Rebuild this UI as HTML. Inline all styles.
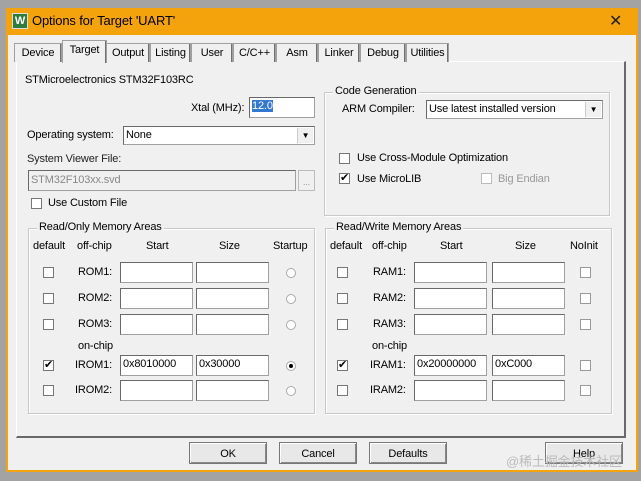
<!DOCTYPE html>
<html><head><style>
body{margin:0;width:641px;height:481px;background:#a3a3a3;position:relative;overflow:hidden;font-family:"Liberation Sans",sans-serif;font-size:11px;letter-spacing:-0.15px;color:#000}
.a{position:absolute}
.win{left:6px;top:8px;width:628px;height:462px;background:#f0f0f0;border:2px solid #f4a40d;border-top:0}
.title{left:6px;top:8px;width:632px;height:27px;background:#f5a30c}
.tab{position:absolute;top:43px;height:18px;border:1px solid #a0a0a0;border-bottom:0;background:#f0f0f0;text-align:center;line-height:18px;box-shadow:inset -1px 0 #707070}
.panel{left:16px;top:61px;width:607px;height:374px;border:1px solid #fff;border-right:2px solid #696969;border-bottom:2px solid #696969}
.grp{position:absolute;border:1px solid #c8c8c8;box-shadow:inset 1px 1px #fff,1px 1px #fff}
.grp span{position:absolute;top:-8px;left:8px;background:#f0f0f0;padding:0 2px}
.ed{position:absolute;height:19px;background:#fff;border:1px solid #a0a0a0;border-top-color:#696969;border-left-color:#696969;box-sizing:border-box;line-height:17px;padding-left:2px}
.cb{position:absolute;width:11px;height:11px;background:#fff;border:1px solid #777;box-sizing:border-box;font-size:11px;line-height:9px;text-align:center}
.rd{position:absolute;width:10px;height:10px;border-radius:50%;border:1px solid #888;box-sizing:border-box;background:#fff}
.btn{position:absolute;top:442px;width:78px;height:22px;border:1px solid #777;box-shadow:inset 1px 1px #fff,inset -1px -1px #888;background:#e8e8e8;text-align:center;line-height:22px;box-sizing:border-box}
.dd{position:absolute;right:1px;top:1px;width:15px;height:15px;background:#f0f0f0;border-left:1px solid #ccc;font-size:8px;text-align:center;line-height:15px}
</style></head><body>
<div class="a win"></div>
<div class="a title"></div>
<div class="a" style="left:12px;top:13px;width:14px;height:14px;background:#2f7d3a;color:#fff;font-weight:bold;font-size:11px;text-align:center;line-height:14px;border:1px solid #ddd">W</div>
<div class="a" style="left:32px;top:13px;font-size:13px">Options for Target 'UART'</div>
<div class="a" style="left:609px;top:11px;font-size:16px;color:#222">✕</div>
<div class="a panel"></div>
<div class="tab" style="left:14px;width:46px">Device</div>
<div class="tab" style="left:106px;width:42px">Output</div>
<div class="tab" style="left:150px;width:39px">Listing</div>
<div class="tab" style="left:191px;width:40px">User</div>
<div class="tab" style="left:233px;width:41px">C/C++</div>
<div class="tab" style="left:276px;width:40px">Asm</div>
<div class="tab" style="left:318px;width:40px">Linker</div>
<div class="tab" style="left:360px;width:44px">Debug</div>
<div class="tab" style="left:406px;width:41px">Utilities</div>
<div class="tab" style="left:62px;top:40px;height:22px;width:43px;z-index:2;line-height:18px">Target</div>

<div class="a" style="left:25px;top:74px">STMicroelectronics STM32F103RC</div>
<div class="a" style="left:191px;top:102px">Xtal (MHz):</div>
<div class="ed" style="left:249px;top:97px;width:66px;height:21px"><span style="background:#3379d1;color:#fff">12.0</span></div>
<div class="a" style="left:27px;top:129px">Operating system:</div>
<div class="ed" style="left:123px;top:126px;width:192px">None<div class="dd">▼</div></div>
<div class="a" style="left:27px;top:153px;color:#222">System Viewer File:</div>
<div class="ed" style="left:28px;top:170px;width:268px;height:21px;background:#f0f0f0;color:#888;line-height:19px">STM32F103xx.svd</div>
<div class="a" style="left:298px;top:170px;width:17px;height:21px;border:1px solid #bbb;box-sizing:border-box;color:#999;font-size:9px;text-align:center;line-height:22px">...</div>
<div class="cb" style="left:31px;top:198px"></div>
<div class="a" style="left:48px;top:197px">Use Custom File</div>

<div class="grp" style="left:324px;top:92px;width:284px;height:122px"><span>Code Generation</span></div>
<div class="a" style="left:342px;top:103px">ARM Compiler:</div>
<div class="ed" style="left:426px;top:100px;width:177px">Use latest installed version<div class="dd">▼</div></div>
<div class="cb" style="left:339px;top:153px"></div>
<div class="a" style="left:357px;top:152px">Use Cross-Module Optimization</div>
<div class="cb" style="left:339px;top:173px">✔</div>
<div class="a" style="left:357px;top:173px">Use MicroLIB</div>
<div class="cb" style="left:481px;top:173px;border-color:#bbb"></div>
<div class="a" style="left:498px;top:173px;color:#999">Big Endian</div>

<div class="grp" style="left:28px;top:228px;width:285px;height:184px"><span>Read/Only Memory Areas</span></div>
<div class="a" style="left:33px;top:240px">default</div>
<div class="a" style="left:77px;top:240px">off-chip</div>
<div class="a" style="left:146px;top:240px">Start</div>
<div class="a" style="left:219px;top:240px">Size</div>
<div class="a" style="left:273px;top:240px">Startup</div>
<div class="a" style="left:78px;top:340px">on-chip</div>

<div class="grp" style="left:325px;top:228px;width:285px;height:184px"><span>Read/Write Memory Areas</span></div>
<div class="a" style="left:330px;top:240px">default</div>
<div class="a" style="left:372px;top:240px">off-chip</div>
<div class="a" style="left:440px;top:240px">Start</div>
<div class="a" style="left:515px;top:240px">Size</div>
<div class="a" style="left:570px;top:240px">NoInit</div>
<div class="a" style="left:372px;top:340px">on-chip</div>

<div id="rows"></div>
<script>
var ys=[262,288,314,355,380],ro=["ROM1:","ROM2:","ROM3:","IROM1:","IROM2:"],rw=["RAM1:","RAM2:","RAM3:","IRAM1:","IRAM2:"];
var h="";
for(var i=0;i<5;i++){var y=ys[i],ck=i==3?"✔":"";
h+='<div class="cb" style="left:43px;top:'+(y+5)+'px">'+ck+'</div>';
h+='<div class="a" style="left:'+(i>2?75:78)+'px;top:'+(y+4)+'px">'+ro[i]+'</div>';
h+='<div class="ed" style="left:120px;top:'+y+'px;width:73px;height:21px">'+(i==3?'0x8010000':'')+'</div>';
h+='<div class="ed" style="left:196px;top:'+y+'px;width:73px;height:21px">'+(i==3?'0x30000':'')+'</div>';
h+='<div class="rd" style="left:286px;top:'+(y+6)+'px;border-color:#aaa">'+(i==3?'<div style="width:4px;height:4px;background:#000;border-radius:50%;margin:2px"></div>':'')+'</div>';
h+='<div class="cb" style="left:337px;top:'+(y+5)+'px">'+ck+'</div>';
h+='<div class="a" style="left:'+(i>2?370:373)+'px;top:'+(y+4)+'px">'+rw[i]+'</div>';
h+='<div class="ed" style="left:414px;top:'+y+'px;width:73px;height:21px">'+(i==3?'0x20000000':'')+'</div>';
h+='<div class="ed" style="left:492px;top:'+y+'px;width:73px;height:21px">'+(i==3?'0xC000':'')+'</div>';
h+='<div class="cb" style="left:580px;top:'+(y+5)+'px;border-color:#999"></div>';}
document.getElementById("rows").innerHTML=h;
</script>
<div class="btn" style="left:189px">OK</div>
<div class="btn" style="left:279px">Cancel</div>
<div class="btn" style="left:369px">Defaults</div>
<div class="btn" style="left:545px">Help</div>
<div class="a" style="left:506px;top:451px;color:#bbb;font-size:13px;font-family:'Liberation Sans','Noto Sans CJK SC',sans-serif">@稀土掘金技术社区</div>
</body></html>
